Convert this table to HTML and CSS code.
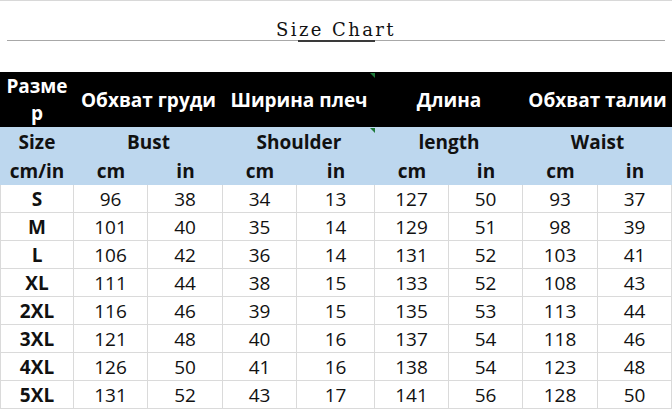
FILE: index.html
```html
<!DOCTYPE html>
<html lang="ru">
<head>
<meta charset="utf-8">
<title>Size Chart</title>
<link rel="stylesheet" href="styles.css">
</head>
<body>
<div class="page">
  <header class="title-area">
    <h1 class="title">Size Chart</h1>
    <div class="rule"><span class="rule-side"></span><span class="rule-accent"></span><span class="rule-side"></span></div>
  </header>
  <div class="chart">
    <div class="cell head-ru">Разме<br>р</div>
    <div class="cell head-ru span2">Обхват груди</div>
    <div class="cell head-ru span2 note">Ширина плеч</div>
    <div class="cell head-ru span2">Длина</div>
    <div class="cell head-ru span2">Обхват талии</div>

    <div class="cell head-en">Size</div>
    <div class="cell head-en span2">Bust</div>
    <div class="cell head-en span2 note">Shoulder</div>
    <div class="cell head-en span2">length</div>
    <div class="cell head-en span2">Waist</div>

    <div class="cell head-en">cm/in</div>
    <div class="cell head-en">cm</div><div class="cell head-en">in</div>
    <div class="cell head-en">cm</div><div class="cell head-en">in</div>
    <div class="cell head-en">cm</div><div class="cell head-en">in</div>
    <div class="cell head-en">cm</div><div class="cell head-en">in</div>

    <div class="cell size">S</div><div class="cell num">96</div><div class="cell num">38</div><div class="cell num">34</div><div class="cell num">13</div><div class="cell num">127</div><div class="cell num">50</div><div class="cell num">93</div><div class="cell num">37</div>
    <div class="cell size">M</div><div class="cell num">101</div><div class="cell num">40</div><div class="cell num">35</div><div class="cell num">14</div><div class="cell num">129</div><div class="cell num">51</div><div class="cell num">98</div><div class="cell num">39</div>
    <div class="cell size">L</div><div class="cell num">106</div><div class="cell num">42</div><div class="cell num">36</div><div class="cell num">14</div><div class="cell num">131</div><div class="cell num">52</div><div class="cell num">103</div><div class="cell num">41</div>
    <div class="cell size">XL</div><div class="cell num">111</div><div class="cell num">44</div><div class="cell num">38</div><div class="cell num">15</div><div class="cell num">133</div><div class="cell num">52</div><div class="cell num">108</div><div class="cell num">43</div>
    <div class="cell size">2XL</div><div class="cell num">116</div><div class="cell num">46</div><div class="cell num">39</div><div class="cell num">15</div><div class="cell num">135</div><div class="cell num">53</div><div class="cell num">113</div><div class="cell num">44</div>
    <div class="cell size">3XL</div><div class="cell num">121</div><div class="cell num">48</div><div class="cell num">40</div><div class="cell num">16</div><div class="cell num">137</div><div class="cell num">54</div><div class="cell num">118</div><div class="cell num">46</div>
    <div class="cell size">4XL</div><div class="cell num">126</div><div class="cell num">50</div><div class="cell num">41</div><div class="cell num">16</div><div class="cell num">138</div><div class="cell num">54</div><div class="cell num">123</div><div class="cell num">48</div>
    <div class="cell size">5XL</div><div class="cell num">131</div><div class="cell num">52</div><div class="cell num">43</div><div class="cell num">17</div><div class="cell num">141</div><div class="cell num">56</div><div class="cell num">128</div><div class="cell num">50</div>
  </div>
</div>
</body>
</html>
```
FILE: styles.css
```css
html, body {
  margin: 0;
  padding: 0;
  background: #ffffff;
}
.page {
  width: 672px;
  height: 409px;
  border-top: 1px solid #d8d8d8;
  box-sizing: border-box;
  overflow: hidden;
  font-family: "Open Sans", "Noto Sans", sans-serif;
  color: #111;
}
.title-area {
  padding-top: 19px;
  height: 71px;
  box-sizing: border-box;
}
.title {
  margin: 0;
  text-align: center;
  font-family: "DejaVu Serif", "Liberation Serif", serif;
  font-weight: normal;
  font-size: 18px;
  line-height: 20px;
  letter-spacing: 2.4px;
  word-spacing: 0;
  color: #111;
}
.rule {
  display: flex;
  margin: 0 7px;
  height: 2px;
}
.rule-side {
  flex: 1;
  border-top: 1px solid #a8a8a8;
}
.rule-accent {
  width: 77px;
  border-top: 2px solid #3a3a3a;
}
.chart {
  display: grid;
  grid-template-columns: 74px 74px 75px 74px 78px 74px 74px 75px 74px;
  grid-template-rows: 55px 29px 29px repeat(8, 28px);
}
.cell {
  display: flex;
  align-items: center;
  justify-content: center;
  text-align: center;
  position: relative;
  box-sizing: border-box;
}
.span2 {
  grid-column: span 2;
}
.head-ru {
  background: #000;
  color: #fff;
  font-weight: 700;
  font-size: 19px;
  line-height: 27px;
  padding-top: 1px;
}
.head-en {
  background: #bdd7ee;
  color: #111;
  font-weight: 700;
  font-size: 19px;
}
.size, .num {
  border-right: 1px solid #dadada;
  border-bottom: 1px solid #dadada;
  font-size: 19px;
}
.size {
  font-weight: 700;
  border-left: 1px solid #dadada;
}
.num {
  font-weight: 400;
}
.note::after {
  content: "";
  position: absolute;
  top: 1px;
  right: 0;
  border-left: 5px solid transparent;
  border-top: 5px solid #1f7a3a;
}
```
